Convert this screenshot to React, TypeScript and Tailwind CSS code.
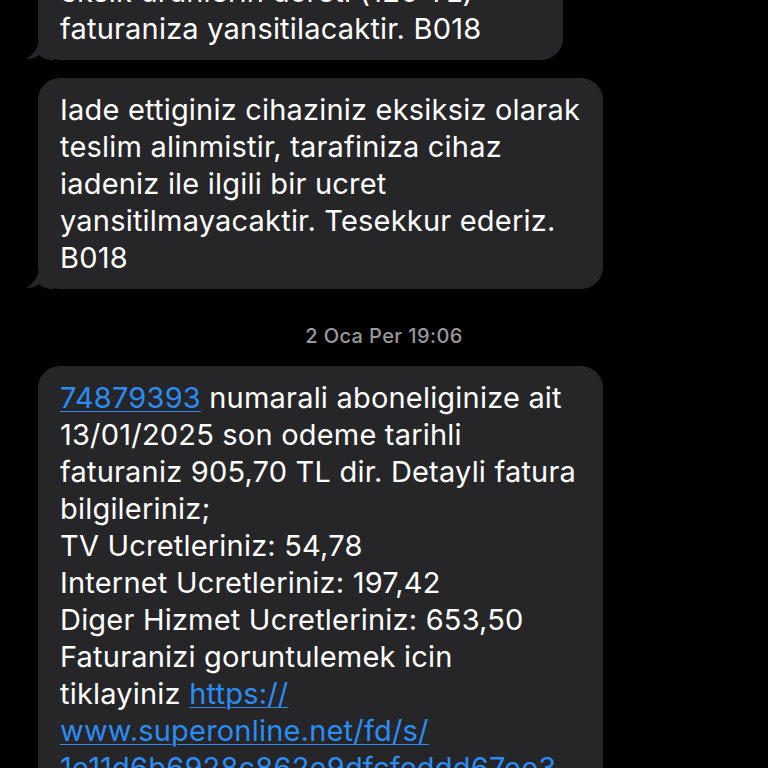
import React from "react";

const Tail = () => (
  <svg
    className="absolute -left-[12px] bottom-0"
    width="28"
    height="24"
    viewBox="0 0 28 24"
  >
    <path d="M14 0 L28 0 L28 24 C21 24 16 22 13 19 C9 22 5 23 0 23 C7 19 13 12 14 0 Z" fill="#262628" />
  </svg>
);

function Bubble({ lines, width, className = "" }: { lines: React.ReactNode[]; width: string; className?: string }) {
  return (
    <div className={`relative ${width} ${className}`}>
      <Tail />
      <div className="relative rounded-[22px] bg-[#262628] px-[22px] py-[13px]">
        {lines.map((l, i) => (
          <div key={i} className="whitespace-nowrap">
            {l}
          </div>
        ))}
      </div>
    </div>
  );
}

const Link = ({ children }: { children: React.ReactNode }) => (
  <span className="text-[#2b8cf4] underline decoration-1 underline-offset-[3px]">{children}</span>
);

export default function App() {
  return (
    <div
      className="h-[768px] w-[768px] overflow-hidden bg-black text-white text-[29px] leading-[37px] tracking-[0.2px]"
      style={{ fontFamily: "Inter, 'Noto Sans', sans-serif" }}
    >
      <div className="flex flex-col pl-[38px]">
        <Bubble
          width="w-[525px]"
          className="-mt-[40px]"
          lines={["eksik urunlerin ucreti (120 TL)", "faturaniza yansitilacaktir. B018"]}
        />
        <Bubble
          width="w-[565px]"
          className="mt-[18px]"
          lines={[
            "Iade ettiginiz cihaziniz eksiksiz olarak",
            "teslim alinmistir, tarafiniza cihaz",
            "iadeniz ile ilgili bir ucret",
            "yansitilmayacaktir. Tesekkur ederiz.",
            "B018",
          ]}
        />
        <div className="pr-[38px] pt-[35px] pb-[18px] text-center text-[20px] leading-[24px] tracking-[0.4px] font-medium text-[#98989d]">
          2 Oca Per 19:06
        </div>
        <Bubble
          width="w-[565px]"
          lines={[
            <>
              <Link>74879393</Link> numarali aboneliginize ait
            </>,
            "13/01/2025 son odeme tarihli",
            "faturaniz 905,70 TL dir. Detayli fatura",
            "bilgileriniz;",
            "TV Ucretleriniz: 54,78",
            "Internet Ucretleriniz: 197,42",
            "Diger Hizmet Ucretleriniz: 653,50",
            "Faturanizi goruntulemek icin",
            <>
              tiklayiniz <Link>https://</Link>
            </>,
            <Link>www.superonline.net/fd/s/</Link>,
            <Link>1e11d6b6928c862e9dfcfeddd67ee3</Link>,
            <Link>a7</Link>,
          ]}
        />
      </div>
    </div>
  );
}
